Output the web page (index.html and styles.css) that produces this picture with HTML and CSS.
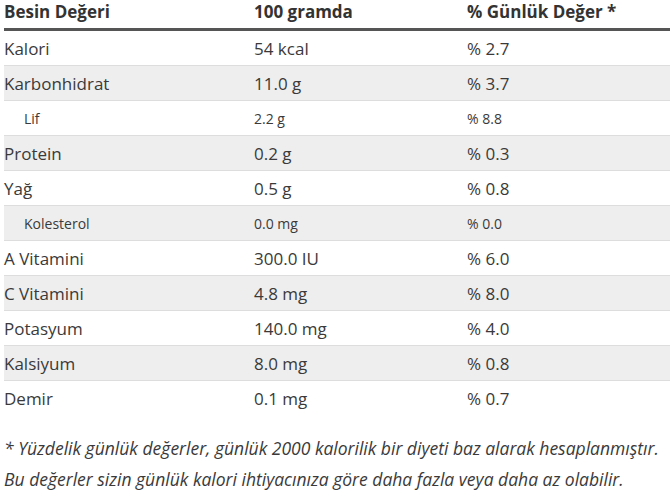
FILE: index.html
```html
<!DOCTYPE html>
<html lang="tr">
<head>
<meta charset="utf-8">
<link rel="stylesheet" href="styles.css">
</head>
<body>
<div class="wrap">
<table class="nutri">
  <colgroup><col class="c1"><col class="c2"><col class="c3"></colgroup>
  <thead>
    <tr><th>Besin Değeri</th><th>100 gramda</th><th>% Günlük Değer *</th></tr>
  </thead>
  <tbody>
    <tr><td>Kalori</td><td>54 kcal</td><td>% 2.7</td></tr>
    <tr class="alt"><td>Karbonhidrat</td><td>11.0 g</td><td>% 3.7</td></tr>
    <tr class="sub"><td>Lif</td><td>2.2 g</td><td>% 8.8</td></tr>
    <tr class="alt"><td>Protein</td><td>0.2 g</td><td>% 0.3</td></tr>
    <tr><td>Yağ</td><td>0.5 g</td><td>% 0.8</td></tr>
    <tr class="alt sub"><td>Kolesterol</td><td>0.0 mg</td><td>% 0.0</td></tr>
    <tr><td>A Vitamini</td><td>300.0 IU</td><td>% 6.0</td></tr>
    <tr class="alt"><td>C Vitamini</td><td>4.8 mg</td><td>% 8.0</td></tr>
    <tr><td>Potasyum</td><td>140.0 mg</td><td>% 4.0</td></tr>
    <tr class="alt"><td>Kalsiyum</td><td>8.0 mg</td><td>% 0.8</td></tr>
    <tr class="last"><td>Demir</td><td>0.1 mg</td><td>% 0.7</td></tr>
  </tbody>
</table>
<p class="note">* Yüzdelik günlük değerler, günlük 2000 kalorilik bir diyeti baz alarak hesaplanmıştır.<br>Bu değerler sizin günlük kalori ihtiyacınıza göre daha fazla veya daha az olabilir.</p>
</div>
</body>
</html>
```
FILE: styles.css
```css
html, body { margin: 0; padding: 0; background: #fff; }
body { font-family: "Open Sans", "Noto Sans", sans-serif; color: #333; }
.wrap { padding-left: 4px; }
.nutri { border-collapse: collapse; width: 666px; table-layout: fixed; }
.c1 { width: 250px; }
.c2 { width: 213px; }
.nutri th { text-align: left; font-weight: 700; font-size: 17px; height: 28px; padding: 0; vertical-align: top; line-height: 24px; border-bottom: 3px solid #555; }
.nutri td { font-size: 17px; font-weight: 400; height: 34px; padding: 0; border-bottom: 1px solid #ddd; color: #3a3a3a; }
.nutri tr.alt td { background: #eee; }
.nutri tr.sub td { font-size: 14px; }
.nutri tr.sub td:first-child { padding-left: 20px; }
.nutri tr.last td { border-bottom: none; }
.note { margin: 18px 0 0; font-style: italic; font-size: 17.5px; line-height: 31px; color: #3a3a3a; }
```
